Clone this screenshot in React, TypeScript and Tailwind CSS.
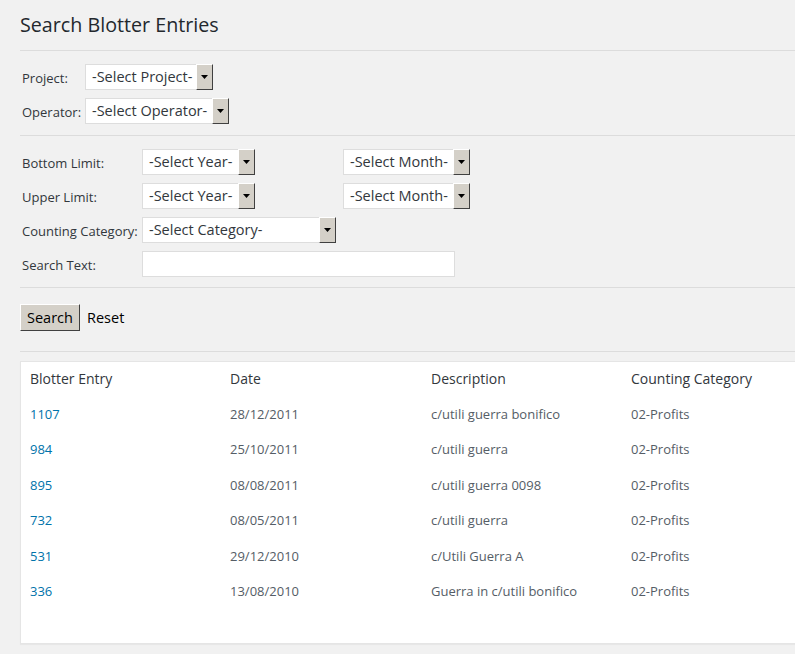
import React from 'react'

const rows = [
  { id: '1107', date: '28/12/2011', desc: 'c/utili guerra bonifico', cat: '02-Profits' },
  { id: '984', date: '25/10/2011', desc: 'c/utili guerra', cat: '02-Profits' },
  { id: '895', date: '08/08/2011', desc: 'c/utili guerra 0098', cat: '02-Profits' },
  { id: '732', date: '08/05/2011', desc: 'c/utili guerra', cat: '02-Profits' },
  { id: '531', date: '29/12/2010', desc: 'c/Utili Guerra A', cat: '02-Profits' },
  { id: '336', date: '13/08/2010', desc: 'Guerra in c/utili bonifico', cat: '02-Profits' },
]

function Select({ label, width }: { label: string; width: string }) {
  return (
    <div className={`${width} h-[26px] flex items-stretch bg-white border border-[#dddddd]`}>
      <span className="flex-1 pl-[6px] flex items-center text-[14.5px] text-[#32373c] whitespace-nowrap overflow-hidden">
        {label}
      </span>
      {/* classic win button */}
      <span className="w-[17px] flex items-center justify-center bg-[#d4d0c8] border-t border-l border-t-white border-l-white border-b border-r border-b-[#404040] border-r-[#404040] -my-px -mr-px">
        <svg width="7" height="4" viewBox="0 0 7 4">
          <path d="M0 0h7L3.5 4z" fill="#000" />
        </svg>
      </span>
    </div>
  )
}

function Row({ label, labelW, children }: { label: string; labelW: string; children: React.ReactNode }) {
  return (
    <div className="flex items-center h-[26px]">
      <span className={`${labelW} pl-[2px] pt-[3px] text-[13px] text-[#32373c]`}>{label}</span>
      {children}
    </div>
  )
}

export default function App() {
  return (
    <div className="min-h-[654px] bg-[#f1f1f1] pl-5 pt-[11px] overflow-hidden" style={{ fontFamily: '"Open Sans", sans-serif' }}>
      <h2 className="text-[19.7px] leading-[28px] text-[#23282d] pb-[11px]">Search Blotter Entries</h2>
      <hr className="border-0 border-t border-[#dcdcdc]" />

      {/* project / operator */}
      <div className="flex flex-col gap-2 pt-[13px] pb-[11px]">
        <Row label="Project:" labelW="w-[65px]">
          <Select label="-Select Project-" width="w-[128px]" />
        </Row>
        <Row label="Operator:" labelW="w-[65px]">
          <Select label="-Select Operator-" width="w-[144px]" />
        </Row>
      </div>
      <hr className="border-0 border-t border-[#dcdcdc]" />

      {/* limits */}
      <div className="flex flex-col gap-2 pt-[13px] pb-[10px]">
        <Row label="Bottom Limit:" labelW="w-[122px]">
          <div className="w-[201px]">
            <Select label="-Select Year-" width="w-[113px]" />
          </div>
          <Select label="-Select Month-" width="w-[127px]" />
        </Row>
        <Row label="Upper Limit:" labelW="w-[122px]">
          <div className="w-[201px]">
            <Select label="-Select Year-" width="w-[113px]" />
          </div>
          <Select label="-Select Month-" width="w-[127px]" />
        </Row>
        <Row label="Counting Category:" labelW="w-[122px]">
          <Select label="-Select Category-" width="w-[194px]" />
        </Row>
        <Row label="Search Text:" labelW="w-[122px]">
          <input className="w-[313px] h-[26px] bg-white border border-[#dddddd] outline-none" />
        </Row>
      </div>
      <hr className="border-0 border-t border-[#dcdcdc]" />

      {/* actions */}
      <div className="flex items-center gap-[7px] pt-4 pb-5">
        <button className="w-[60px] h-[27px] bg-[#d4d0c8] text-[14.5px] text-black border border-t-white border-l-white border-b-[#404040] border-r-[#404040]">
          Search
        </button>
        <span className="text-[14.5px] text-black">Reset</span>
      </div>
      <hr className="border-0 border-t border-[#dcdcdc]" />

      {/* results */}
      <div className="mt-[9px] bg-white border border-[#e5e5e5] border-r-0 shadow-[0_1px_1px_rgba(0,0,0,0.04)] pl-[9px] pb-[34px]">
        <div className="grid grid-cols-[200px_201px_200px_200px] h-[35px] pb-[2px] items-center text-[14px] text-[#32373c]">
          <span>Blotter Entry</span>
          <span>Date</span>
          <span>Description</span>
          <span>Counting Category</span>
        </div>
        {rows.map(r => (
          <div key={r.id} className="grid grid-cols-[200px_201px_200px_200px] h-[35.4px] items-center text-[13px] text-[#555d66]">
            <a className="text-[#0073aa]">{r.id}</a>
            <span>{r.date}</span>
            <span>{r.desc}</span>
            <span>{r.cat}</span>
          </div>
        ))}
      </div>
    </div>
  )
}
